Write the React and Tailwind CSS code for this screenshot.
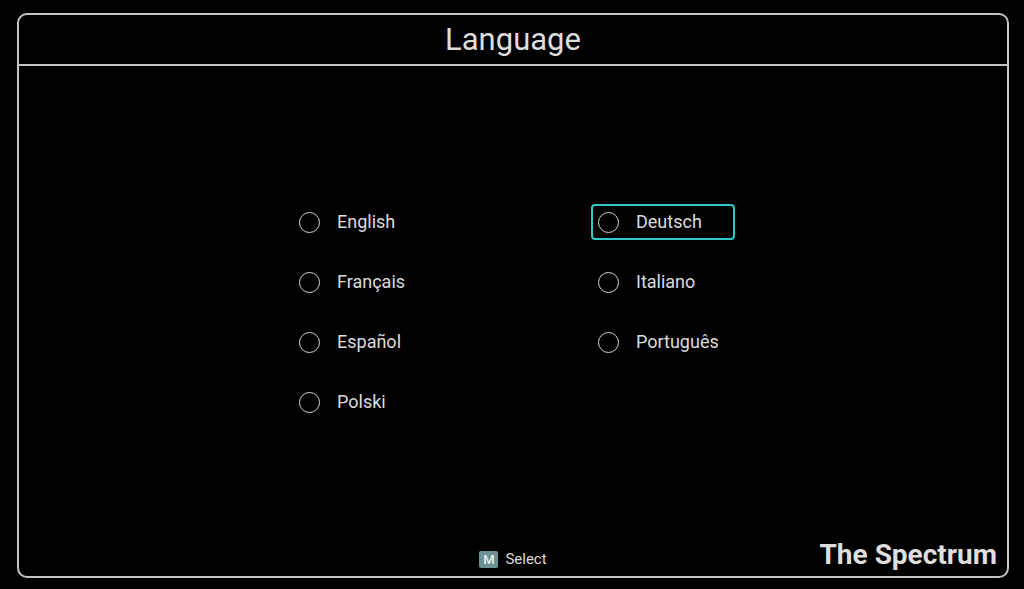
import React from "react";

const left = ["English", "Français", "Español", "Polski"];
const right = ["Deutsch", "Italiano", "Português"];

function Item({ label, selected }) {
  return (
    <div
      className={
        "flex h-[36px] w-[144px] items-center rounded-[4px] border-2 pl-[5px] " +
        (selected ? "border-[#2ec8c8]" : "border-transparent")
      }
    >
      <div className="h-[21px] w-[21px] shrink-0 rounded-full border-[1.7px] border-[#d4d4d4]" />
      <span className="ml-[17px] text-[18px] leading-none text-[#dcdcdc]">{label}</span>
    </div>
  );
}

export default function App() {
  return (
    <div
      className="h-[589px] w-full overflow-hidden bg-black pl-[17px] pt-[13px]"
      style={{ fontFamily: "Roboto, 'Noto Sans', sans-serif" }}
    >
      <div className="flex h-[565px] w-[992px] flex-col rounded-[10px] border-2 border-[#c4c4c4]">
        <div className="flex h-[51px] items-center justify-center border-b-2 border-[#c4c4c4]">
          <span className="text-[31px] leading-none text-[#dedede]">Language</span>
        </div>
        <div className="flex flex-1 pl-[273px] pt-[138px]">
          <div className="flex w-[299px] flex-col gap-[24px]">
            {left.map((l) => (
              <Item key={l} label={l} />
            ))}
          </div>
          <div className="flex flex-col gap-[24px]">
            {right.map((l, i) => (
              <Item key={l} label={l} selected={i === 0} />
            ))}
          </div>
        </div>
        <div className="grid h-[41px] grid-cols-[1fr_auto_1fr] items-start">
          <div />
          <div className="mt-[16px] flex items-center">
            <div className="flex h-[17px] w-[19px] items-center justify-center rounded-[2px] bg-[#6b9393] text-[13px] font-medium leading-none text-[#e8f0f0]">
              M
            </div>
            <span className="ml-[7px] text-[15px] leading-none text-[#dcdcdc]">Select</span>
          </div>
          <div className="flex justify-end pr-[10px] pt-[6px]">
            <span className="text-[28px] font-bold leading-none text-[#dedede]">The Spectrum</span>
          </div>
        </div>
      </div>
    </div>
  );
}
